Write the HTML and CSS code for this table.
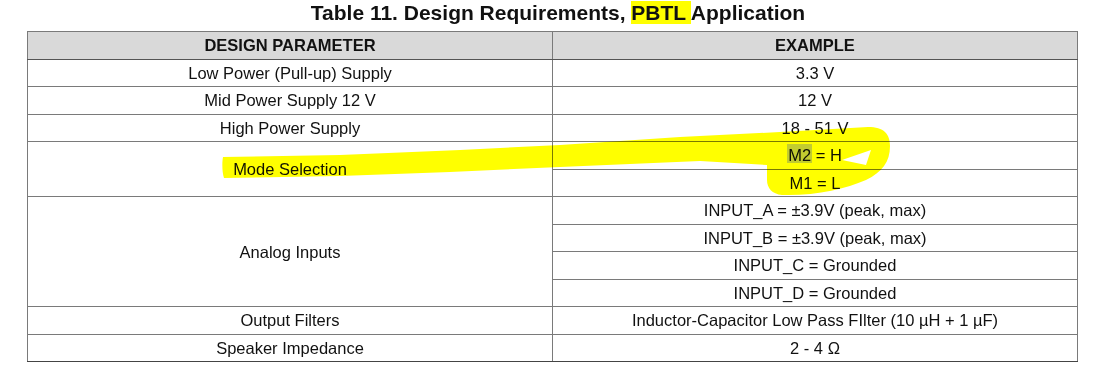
FILE: index.html
```html
<!DOCTYPE html>
<html>
<head>
<meta charset="utf-8">
<link rel="stylesheet" href="styles.css">
</head>
<body>
<div class="page">
  <h1 class="title">Table 11. Design Requirements, <span class="mark">PBTL </span>Application</h1>
  <table class="req">
    <thead>
      <tr><th class="c1">DESIGN PARAMETER</th><th class="c2">EXAMPLE</th></tr>
    </thead>
    <tbody>
      <tr><td>Low Power (Pull-up) Supply</td><td>3.3 V</td></tr>
      <tr><td>Mid Power Supply 12 V</td><td>12 V</td></tr>
      <tr><td>High Power Supply</td><td>18 - 51 V</td></tr>
      <tr><td rowspan="2" class="mode">Mode Selection</td><td><span class="m2">M2</span> = H</td></tr>
      <tr><td>M1 = L</td></tr>
      <tr><td rowspan="4">Analog Inputs</td><td>INPUT_A = ±3.9V (peak, max)</td></tr>
      <tr><td>INPUT_B = ±3.9V (peak, max)</td></tr>
      <tr><td>INPUT_C = Grounded</td></tr>
      <tr><td>INPUT_D = Grounded</td></tr>
      <tr><td>Output Filters</td><td>Inductor-Capacitor Low Pass FIlter (10 µH + 1 µF)</td></tr>
      <tr><td>Speaker Impedance</td><td>2 - 4 Ω</td></tr>
    </tbody>
  </table>
  <svg class="ink" width="1116" height="379" viewBox="0 0 1116 379" aria-hidden="true">
    <path fill="#ffff00" fill-rule="evenodd" d="M223,157 L340,155 L460,150 L560,145 L680,137 L780,132 L868,127 C884,127 890,134 890,146 C890,162 882,172 866,180 C845,189 815,196 782,195 C772,194 767,188 767,180 L767,165 L700,161 L560,167 L450,172 L340,176 L224,178 C222,172 222,162 223,157 Z M842,160 L871,150 L866,165 Z"/>
    <rect x="787" y="144" width="25" height="19" fill="#c2cc30"/>
  </svg>
</div>
</body>
</html>
```

FILE: styles.css
```css
html, body {
  margin: 0;
  padding: 0;
  background: #ffffff;
}

.page {
  position: relative;
  width: 1116px;
  height: 379px;
  overflow: hidden;
  font-family: "Liberation Sans", Arial, sans-serif;
  color: #111;
}

.title {
  margin: 0;
  height: 31px;
  font-size: 21px;
  font-weight: bold;
  line-height: 25px;
  text-align: center;
  color: #111;
}

.mark {
  background: #ffff00;
  mix-blend-mode: multiply;
}

.req {
  margin-left: 27px;
  width: 1051px;
  border-collapse: collapse;
  font-size: 16.5px;
  table-layout: fixed;
}

.req th,
.req td {
  border: 1px solid #7a7a7a;
  height: 26.5px;
  padding: 0;
  text-align: center;
  vertical-align: middle;
  line-height: 18px;
}

.req th {
  background: #d9d9d9;
  font-weight: bold;
  border-bottom-color: #555;
}

.req .c1 {
  width: 524px;
}

.req tbody tr:last-child td {
  border-bottom-color: #444;
}

.ink {
  position: absolute;
  left: 0;
  top: 0;
  mix-blend-mode: multiply;
  pointer-events: none;
}
```
